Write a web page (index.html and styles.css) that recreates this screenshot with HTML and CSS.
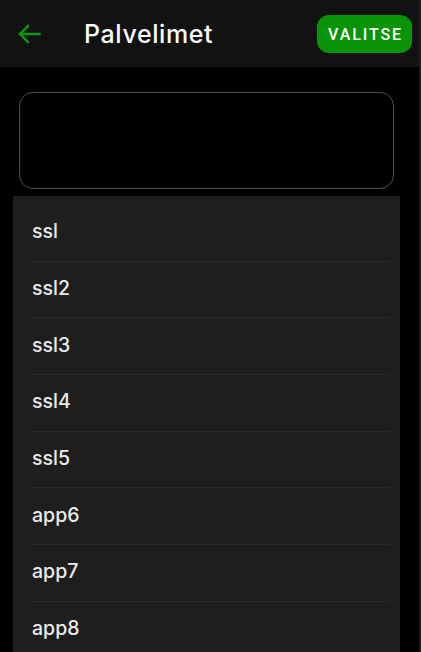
FILE: index.html
```html
<!DOCTYPE html>
<html lang="fi">
<head>
<meta charset="utf-8">
<title>Palvelimet</title>
<link rel="stylesheet" href="styles.css">
</head>
<body>
<div class="app">
  <header class="topbar">
    <button class="back" aria-label="Takaisin">
      <svg width="24" height="20" viewBox="0 0 24 20" fill="none" stroke="#0a9a0a" stroke-width="2.4" stroke-linecap="square" stroke-linejoin="miter">
        <path d="M22.5 10H3M11 2L3 10L11 18"/>
      </svg>
    </button>
    <h1 class="title">Palvelimet</h1>
    <button class="select">VALITSE</button>
  </header>
  <main class="content">
    <div class="search"></div>
    <ul class="list">
      <li class="item">ssl</li>
      <li class="item">ssl2</li>
      <li class="item">ssl3</li>
      <li class="item">ssl4</li>
      <li class="item">ssl5</li>
      <li class="item">app6</li>
      <li class="item">app7</li>
      <li class="item">app8</li>
    </ul>
  </main>
</div>
</body>
</html>
```
FILE: styles.css
```css
html, body {
  margin: 0;
  padding: 0;
  background: #000;
  height: 100%;
  overflow: hidden;
}
.app {
  width: 419px;
  height: 652px;
  border-right: 2px solid #1f1f1f;
  display: flex;
  flex-direction: column;
  font-family: "Inter", "Noto Sans", sans-serif;
  color: #ececec;
}
.topbar {
  height: 67px;
  flex: none;
  background: #121212;
  display: flex;
  align-items: center;
  padding: 0 7px 0 16px;
  box-sizing: border-box;
}
.back {
  background: none;
  border: 0;
  padding: 0;
  width: 25px;
  height: 24px;
  display: flex;
  align-items: center;
  justify-content: center;
}
.title {
  margin: 0 0 0 43px;
  font-size: 25px;
  font-weight: 500;
  color: #fafafa;
  letter-spacing: 0.6px;
  flex: 1;
}
.select {
  width: 95px;
  height: 38px;
  margin-top: 1px;
  border: 0;
  border-radius: 12px;
  background: #089408;
  color: #fff;
  font-family: "Roboto", "Liberation Sans", sans-serif;
  font-size: 16px;
  font-weight: 500;
  letter-spacing: 1.9px;
  padding: 0 0 0 2px;
}
.content {
  flex: 1;
  display: flex;
  flex-direction: column;
  padding: 25px 19px 0 13px;
  min-height: 0;
}
.search {
  height: 97px;
  margin: 0 6px;
  box-sizing: border-box;
  border: 1px solid #4e4e4e;
  border-radius: 14px;
  background: #000;
  flex: none;
}
.list {
  list-style: none;
  margin: 7px 0 0;
  padding: 9px 10px 0 19px;
  background: #1e1e1e;
  flex: 1;
}
.item {
  height: 56.67px;
  box-sizing: border-box;
  border-bottom: 1px solid #2b2b2b;
  display: flex;
  align-items: center;
  font-size: 19.5px;
  font-weight: 500;
  color: #ebebeb;
  padding-bottom: 3px;
}
```
